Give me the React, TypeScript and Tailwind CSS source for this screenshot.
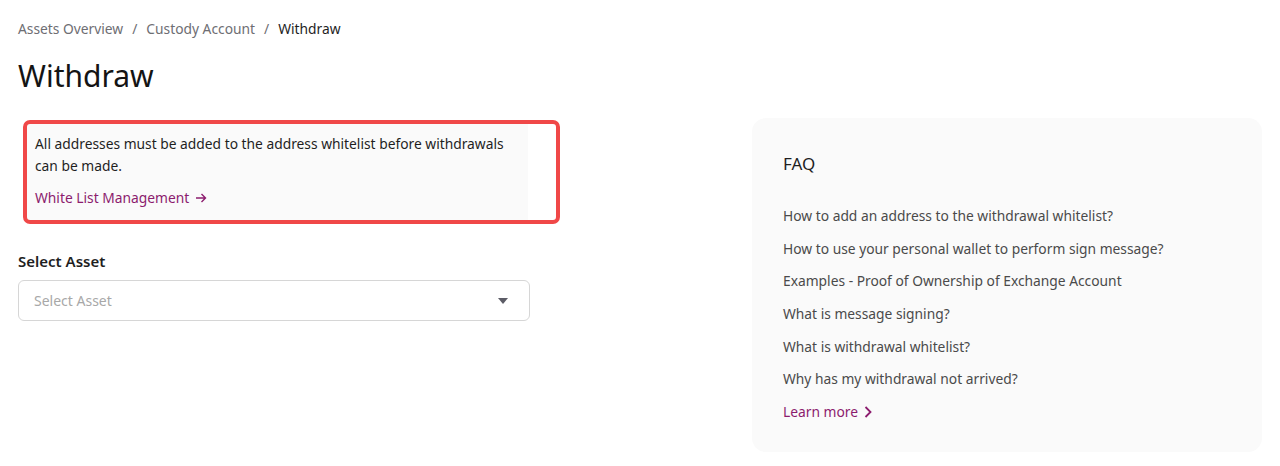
import React from "react";

const faqs = [
  "How to add an address to the withdrawal whitelist?",
  "How to use your personal wallet to perform sign message?",
  "Examples - Proof of Ownership of Exchange Account",
  "What is message signing?",
  "What is withdrawal whitelist?",
  "Why has my withdrawal not arrived?",
];

export default function App() {
  return (
    <div
      className="w-[1280px] h-[466px] bg-white px-[18px] pt-[19px] text-[#1f1f1f]"
      style={{ fontFamily: '"Noto Sans", "Open Sans", sans-serif' }}
    >
      <nav className="flex items-center gap-[9px] text-[13.8px] leading-[20px] text-[#6e6e73]">
        <span>Assets Overview</span>
        <span>/</span>
        <span>Custody Account</span>
        <span>/</span>
        <span className="text-[#1f1f1f]">Withdraw</span>
      </nav>
      <h1 className="mt-[17px] text-[30px] leading-[40px] font-normal text-[#141414]">Withdraw</h1>
      <div className="mt-[20px] flex justify-between">
        <div className="w-[512px]">
          <div className="relative ml-[5px] mt-[8px]">
            <div className="absolute left-[0px] top-[-4px] w-[537px] h-[104px] rounded-[7px] border-[4px] border-[#f04848] pointer-events-none" />
            <div className="ml-[4px] w-[501px] h-[96px] bg-[#fafafa] pl-[8px] pr-[10px] pt-[9px]">
              <p className="text-[13.8px] leading-[22px] text-[#1f1f1f]">
                All addresses must be added to the address whitelist before withdrawals can be made.
              </p>
              <a className="mt-[10px] flex items-center gap-[6px] text-[13.8px] leading-[22px] text-[#8c1c6e]">
                White List Management
                <svg width="12" height="12" viewBox="0 0 12 12" fill="none" stroke="currentColor" strokeWidth="1.4">
                  <path d="M1 6h9.5M6.5 2l4 4-4 4" />
                </svg>
              </a>
            </div>
          </div>
          <div className="mt-[30px] text-[15px] leading-[22px] font-semibold text-[#1f1f1f]">Select Asset</div>
          <div className="mt-[8px] flex h-[41px] items-center justify-between rounded-[6px] border border-[#d6d6d6] px-[15px]">
            <span className="text-[14px] text-[#a8a8a8]">Select Asset</span>
            <svg width="10" height="6" viewBox="0 0 10 6" className="mr-[6px]">
              <path d="M0 0h10L5 6z" fill="#5c5c66" />
            </svg>
          </div>
        </div>
        <div className="mt-[2px] w-[510px] h-[334px] rounded-[14px] bg-[#fafafa] pl-[31px] pt-[34px]">
          <h2 className="text-[17px] leading-[24px] font-normal text-[#1f1f1f]">FAQ</h2>
          <ul className="mt-[30px] flex flex-col gap-[12.7px]">
            {faqs.map((f) => (
              <li key={f} className="text-[13.8px] leading-[20px] text-[#4a4a4a]">{f}</li>
            ))}
            <li className="flex items-center gap-[6px] text-[13.8px] leading-[20px] text-[#8c1c6e]">
              Learn more
              <svg width="8" height="12" viewBox="0 0 8 12" fill="none" stroke="currentColor" strokeWidth="1.8">
                <path d="M1.5 1l5 5-5 5" />
              </svg>
            </li>
          </ul>
        </div>
      </div>
    </div>
  );
}
